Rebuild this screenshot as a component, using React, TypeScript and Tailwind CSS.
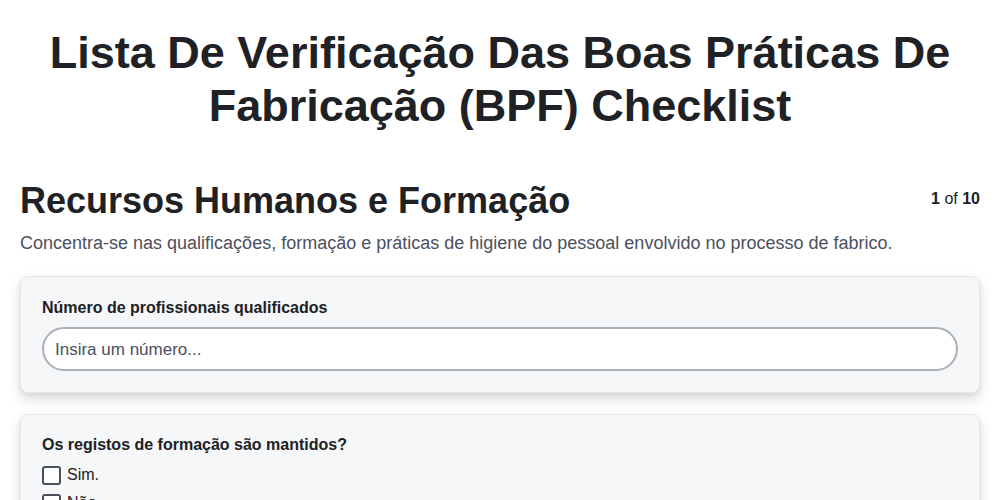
import React from "react";

export default function App() {
  return (
    <div className="min-h-screen bg-white text-[#1f2328]" style={{ fontFamily: '"Liberation Sans", Arial, sans-serif' }}>
      <div className="px-5">
        <h1 className="text-center text-[45px] font-bold leading-[53px] pt-[26px] text-[#202124]">
          Lista De Verificação Das Boas Práticas De Fabricação (BPF) Checklist
        </h1>
        <div className="mt-[47px] flex items-start justify-between">
          <h2 className="text-[36px] font-bold leading-[44px] text-[#202124]">Recursos Humanos e Formação</h2>
          <div className="text-[16px] mt-[8px] text-[#202124]"><span className="font-bold">1</span> of <span className="font-bold">10</span></div>
        </div>
        <p className="mt-[8px] text-[18px] leading-[24px] text-[#4b5060]">
          Concentra-se nas qualificações, formação e práticas de higiene do pessoal envolvido no processo de fabrico.
        </p>
        <div className="mt-[21px] flex flex-col gap-[21px]">
          <div className="rounded-lg border border-[#e5e7eb] bg-[#f6f7f9] px-[21px] pt-[19px] pb-[21px] shadow-[0_6px_14px_rgba(0,0,0,0.14),0_2px_4px_rgba(0,0,0,0.06)]">
            <label className="block text-[16px] font-bold leading-[24px] text-[#202124]">Número de profissionais qualificados</label>
            <input
              type="text"
              placeholder="Insira um número..."
              className="mt-[7px] block h-[44px] w-full rounded-full border-2 border-[#a9afb7] bg-white px-[11px] pt-[2px] text-[17px] text-[#202124] placeholder:text-[#4b5060] outline-none"
            />
          </div>
          <div className="rounded-lg border border-[#e5e7eb] bg-[#f6f7f9] px-[21px] pt-[18px] pb-[20px] shadow-[0_6px_14px_rgba(0,0,0,0.14),0_2px_4px_rgba(0,0,0,0.06)]">
            <div className="text-[16px] font-bold leading-[24px] text-[#202124]">Os registos de formação são mantidos?</div>
            <div className="mt-[7px] flex flex-col gap-[6px]">
              {["Sim.", "Não."].map((o) => (
                <label key={o} className="flex items-center gap-[6px] text-[16px] leading-[22px] text-[#202124]">
                  <span className="inline-block h-[19px] w-[19px] rounded-[3px] border-2 border-[#4a4f5c] bg-white" />
                  {o}
                </label>
              ))}
            </div>
          </div>
        </div>
      </div>
    </div>
  );
}
